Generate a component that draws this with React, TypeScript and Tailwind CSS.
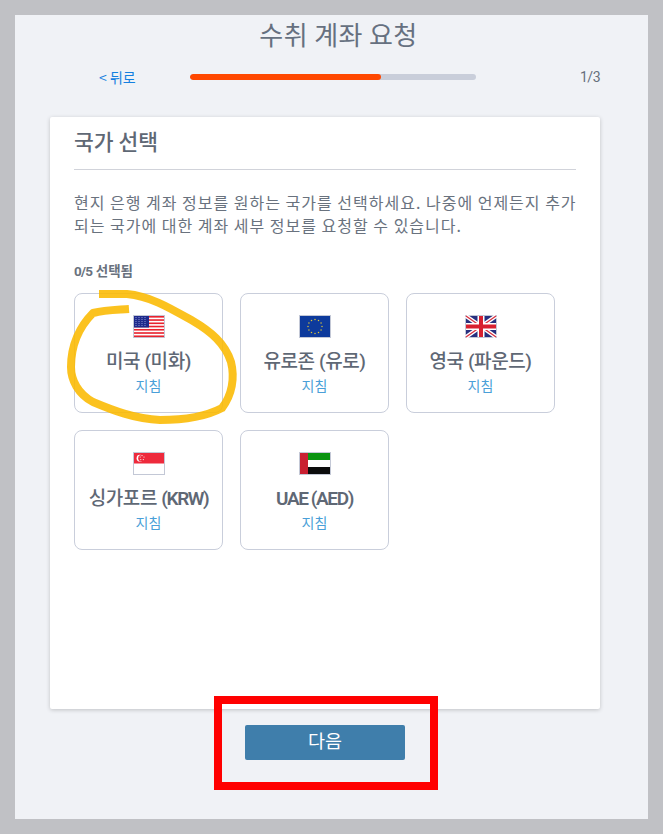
const kr = { fontFamily: '"Noto Sans CJK KR", "Noto Sans", sans-serif' };
const mixed = { fontFamily: 'Roboto, "Noto Sans CJK KR", sans-serif' };

function UsFlag() {
    const stripes = [0, 2, 4, 6, 8, 10, 12];
    return (
        <svg width="32" height="23" viewBox="0 0 32 23" className="block">
            <rect x="0.5" y="0.5" width="31" height="22" fill="#fff" stroke="#c3c8d6" />
            {stripes.map((s) => (
                <rect key={s} x="1" y={1 + s * 1.62} width="30" height="1.62" fill="#e8222e" />
            ))}
            <rect x="1" y="1" width="15" height="11.5" fill="#1f2a8c" />
            {[3, 6, 9, 12].map((x) => (
                <line key={x} x1={x} y1="2" x2={x} y2="12" stroke="#8f96d6" strokeWidth="1" strokeDasharray="1 1" />
            ))}
        </svg>
    );
}

function EuFlag() {
    const stars = Array.from({ length: 12 }, (_, i) => i * 30);
    return (
        <svg width="32" height="23" viewBox="0 0 32 23" className="block">
            <rect x="0.5" y="0.5" width="31" height="22" fill="#0d3a9c" stroke="#c3c8d6" />
            {stars.map((a) => (
                <circle
                    key={a}
                    cx={16 + 7 * Math.cos((a * Math.PI) / 180)}
                    cy={11.5 + 7 * Math.sin((a * Math.PI) / 180)}
                    r="0.75"
                    fill="#d9c23a"
                />
            ))}
        </svg>
    );
}

function UkFlag() {
    return (
        <svg width="32" height="23" viewBox="0 0 32 23" className="block">
            <rect x="0.5" y="0.5" width="31" height="22" fill="#27307f" stroke="#c3c8d6" />
            <path d="M1 1L31 22M31 1L1 22" stroke="#fff" strokeWidth="4" />
            <path d="M1 1L31 22M31 1L1 22" stroke="#d8303f" strokeWidth="1.3" />
            <path d="M16 1V22M1 11.5H31" stroke="#fff" strokeWidth="7" />
            <path d="M16 1V22M1 11.5H31" stroke="#d8202f" strokeWidth="4" />
        </svg>
    );
}

function SgFlag() {
    return (
        <svg width="32" height="23" viewBox="0 0 32 23" className="block">
            <rect x="0.5" y="0.5" width="31" height="22" fill="#fff" stroke="#c3c8d6" />
            <rect x="1" y="1" width="30" height="10.5" fill="#ee2a3c" />
            <circle cx="7" cy="6.2" r="3.4" fill="#fff" />
            <circle cx="8.4" cy="6.2" r="3.2" fill="#ee2a3c" />
            {[[9, 3.6], [11, 5], [10.3, 7.6], [7.8, 7.6], [7.2, 5]].map(([x, y]) => (
                <circle key={x + '-' + y} cx={x} cy={y} r="0.55" fill="#fff" />
            ))}
        </svg>
    );
}

function AeFlag() {
    return (
        <svg width="32" height="23" viewBox="0 0 32 23" className="block">
            <rect x="0.5" y="0.5" width="31" height="22" fill="#fff" stroke="#c3c8d6" />
            <rect x="9" y="1" width="22" height="7" fill="#0a9410" />
            <rect x="9" y="15" width="22" height="7" fill="#0c0c0c" />
            <rect x="1" y="1" width="8" height="21" fill="#c91f31" />
        </svg>
    );
}

const countries = [
    { name: '미국 (미화)', flag: <UsFlag /> },
    { name: '유로존 (유로)', flag: <EuFlag /> },
    { name: '영국 (파운드)', flag: <UkFlag /> },
    { name: '싱가포르', code: '(KRW)', flag: <SgFlag /> },
    { name: '', code: 'UAE (AED)', flag: <AeFlag /> },
];

function CountryCard({ name, code, flag }: { name: string; code?: string; flag: React.ReactNode }) {
    return (
        <div className="flex h-[120px] w-[149px] flex-col items-center rounded-[8px] border border-[#c9cedb] pt-[21px]">
            {flag}
            <div
                className="mt-[10px] text-[19px] leading-[27px] font-medium tracking-[-0.4px] whitespace-nowrap text-[#5f6875]"
                style={mixed}
            >
                {name}
                {code && name && ' '}
                {code && <span className="font-semibold tracking-[-1.4px]">{code}</span>}
            </div>
            <div className="text-[14px] leading-[20px] text-[#4a9fd8]">지침</div>
        </div>
    );
}

export default function App() {
    return (
        <div className="relative h-[834px] w-[663px] overflow-hidden bg-[#c0c1c5] p-[15px]" style={kr}>
            <div className="flex h-full flex-col bg-[#f0f2f6] pl-[35px]">
                <h1 className="mt-px w-[577px] text-center text-[26px] leading-[36px] font-normal tracking-[0.4px] text-[#667080]">
                    수취 계좌 요청
                </h1>

                <div className="mt-[14px] flex h-[22px] w-[550px] items-center">
                    <div className="w-[140px] pl-[49px] text-[14px] text-[#1480e0]">&lt; 뒤로</div>
                    <div className="h-[6px] w-[286px] overflow-hidden rounded-full bg-[#c9ceda]">
                        <div className="h-full w-[191px] rounded-full bg-[#ff4800]" />
                    </div>
                    <div className="ml-auto text-[14px] tracking-[-0.5px] text-[#666f7c]" style={mixed}>1/3</div>
                </div>

                <div className="mt-[29px] h-[592px] w-[550px] rounded-[2px] bg-white px-[24px] shadow-[0_1px_4px_rgba(0,0,0,0.2)]">
                    <h2 className="h-[53px] w-[502px] border-b border-[#d1d3da] pt-[9px] text-[21.5px] leading-[30px] font-medium text-[#5f6875]">
                        국가 선택
                    </h2>
                    <p className="mt-[21px] w-[510px] text-[16px] leading-[23px] tracking-[1px] text-[#69727e]">
                        현지 은행 계좌 정보를 원하는 국가를 선택하세요. 나중에 언제든지 추가
                        <br />
                        되는 국가에 대한 계좌 세부 정보를 요청할 수 있습니다.
                    </p>
                    <div className="mt-[25px] text-[13.5px] leading-[18px] font-bold text-[#69727e]" style={mixed}>
                        <span className="tracking-[-0.7px]">0/5</span> 선택됨
                    </div>
                    <div className="mt-[13px] grid w-[481px] grid-cols-[149px_149px_149px] gap-[17px]">
                        {countries.map((c) => (
                            <CountryCard key={c.name + c.code} name={c.name} code={c.code} flag={c.flag} />
                        ))}
                    </div>
                </div>

                <div className="mt-[16px] flex w-[550px] justify-center">
                    <button className="h-[35px] w-[160px] rounded-[2px] bg-[#3f7eab] pb-[3px] text-[18.5px] text-white">
                        다음
                    </button>
                </div>
            </div>

            <svg width="663" height="834" className="pointer-events-none absolute inset-0">
                <path
                    d="M99 294 L127 294 C150 296 170 308 193 321 C210 331 225 343 231 362 C235 378 232 395 222 408 C205 417 185 420 160 420 C135 419 112 410 93 402 C78 394 71 380 71 367 C71 345 80 326 93 313 C105 310 115 310 129 309"
                    fill="none"
                    stroke="#fbb900"
                    strokeOpacity="0.88"
                    strokeWidth="8"
                />
                <rect x="218" y="700" width="216" height="86" fill="none" stroke="#ff0000" strokeWidth="8" />
            </svg>
        </div>
    );
}
